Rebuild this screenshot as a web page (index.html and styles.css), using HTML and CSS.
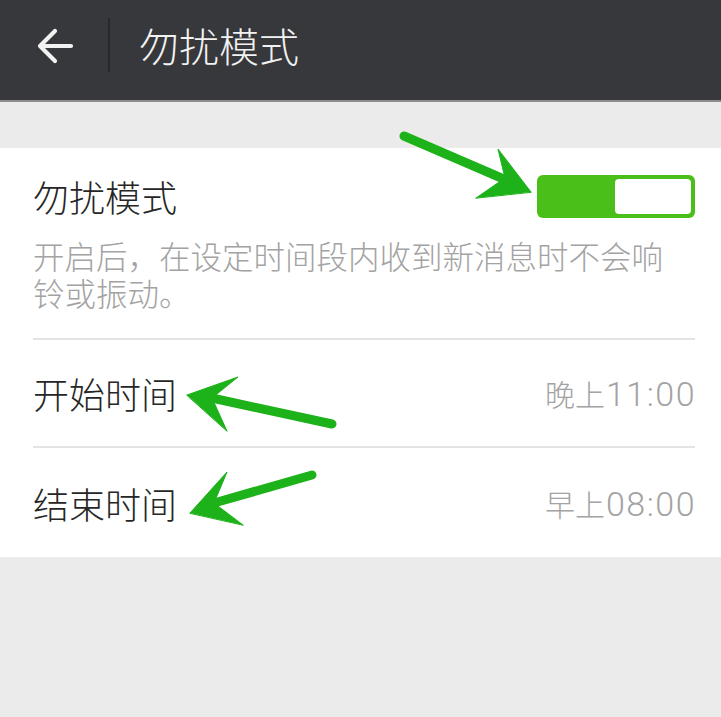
FILE: index.html
```html
<!DOCTYPE html>
<html lang="zh-CN">
<head>
<meta charset="utf-8">
<title>勿扰模式</title>
<link rel="stylesheet" href="styles.css">
</head>
<body>
<div class="page">
  <header class="topbar">
    <div class="back">
      <svg width="38" height="38" viewBox="0 0 38 38"><path d="M35 19 H4 M19 4 L4 19 L19 34" fill="none" stroke="#f2f2f2" stroke-width="4.2" stroke-linecap="round" stroke-linejoin="round"/></svg>
    </div>
    <div class="vsep"></div>
    <div class="title">勿扰模式</div>
  </header>
  <div class="gap"></div>
  <section class="card">
    <div class="switch-block">
      <div class="switch-row">
        <div class="label">勿扰模式</div>
        <div class="toggle"><div class="knob"></div></div>
      </div>
      <div class="desc">开启后，在设定时间段内收到新消息时不会响铃或振动。</div>
    </div>
    <div class="row">
      <div class="label">开始时间</div>
      <div class="value">晚上<span class="num">11:00</span></div>
    </div>
    <div class="row last">
      <div class="label">结束时间</div>
      <div class="value">早上<span class="num">08:00</span></div>
    </div>
  </section>
  <svg class="arrows" width="721" height="717" viewBox="0 0 721 717">
    <g fill="#1db21a" stroke="#1db21a" stroke-linecap="round" stroke-linejoin="round">
      <line x1="404" y1="136" x2="506" y2="180" stroke-width="9"/>
      <polygon points="531,192 498,149 505,178 476,198" stroke-width="1"/>
      <line x1="332" y1="424" x2="212" y2="398" stroke-width="9"/>
      <polygon points="187,395 238,377 212,398 227,431" stroke-width="1"/>
      <line x1="312" y1="475" x2="214" y2="503" stroke-width="9"/>
      <polygon points="190,513 227,472 214,503 243,525" stroke-width="1"/>
    </g>
  </svg>
</div>
</body>
</html>
```
FILE: styles.css
```css
* { box-sizing: border-box; }
html, body { margin: 0; padding: 0; }
body {
  background: #ebebeb;
  font-family: "Noto Sans CJK SC", "Noto Sans", sans-serif;
  width: 721px;
  height: 717px;
  overflow: hidden;
}
.page { position: relative; width: 721px; height: 717px; }
.topbar {
  height: 102px;
  background: #37383c;
  border-bottom: 2px solid #8c8c8e;
  display: flex;
  align-items: center;
}
.back {
  width: 108px;
  display: flex;
  justify-content: flex-start;
  padding-left: 36px;
  margin-top: -8px;
}
.back svg { display: block; }
.vsep {
  width: 2px;
  height: 54px;
  background: #27282b;
  margin-top: -10px;
}
.title {
  color: #f2f2f2;
  font-size: 40px;
  line-height: 48px;
  margin-left: 29px;
  margin-top: -10px;
  font-weight: 300;
}
.gap { height: 46px; }
.card {
  background: #fff;
  padding: 0 26px 0 33px;
}
.switch-block {
  padding: 24px 0 27px;
  border-bottom: 2px solid #e3e3e3;
}
.switch-row {
  display: flex;
  align-items: center;
  justify-content: space-between;
  height: 48px;
}
.label {
  font-size: 36px;
  line-height: 48px;
  color: #262626;
  font-weight: 300;
}
.toggle {
  width: 158px;
  height: 43px;
  background: #4bbf19;
  border-radius: 6px;
  padding: 4px;
  display: flex;
  justify-content: flex-end;
}
.knob {
  width: 76px;
  height: 35px;
  background: #fff;
  border-radius: 4px;
}
.desc {
  margin-top: 17px;
  font-size: 31.5px;
  line-height: 37px;
  color: #a3a3a3;
  padding-right: 20px;
  font-weight: 300;
}
.row {
  height: 108px;
  display: flex;
  align-items: center;
  justify-content: space-between;
  border-bottom: 2px solid #e3e3e3;
}
.row.last { border-bottom: none; height: 109px; }
.value {
  font-size: 30px;
  color: #a3a3a3;
  font-weight: 300;
  display: flex;
  align-items: baseline;
}
.num {
  font-family: Roboto, "Noto Sans", sans-serif;
  font-size: 34px;
  letter-spacing: 1.5px;
  margin-left: 1px;
  margin-right: -1px;
}
.arrows {
  position: absolute;
  left: 0;
  top: 0;
  pointer-events: none;
}
```
